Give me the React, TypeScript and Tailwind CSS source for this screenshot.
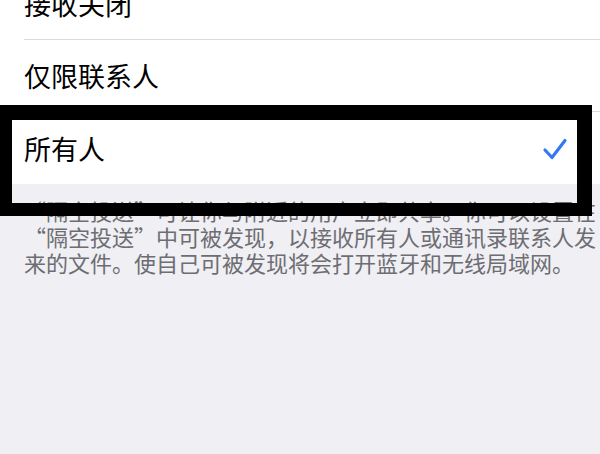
import React from "react";

const font = { fontFamily: '"Noto Sans CJK SC", "Noto Sans", sans-serif' };

function Row({ label, checked, last }: { label: string; checked?: boolean; last?: boolean }) {
  return (
    <div className="pl-[24px] h-[72px] flex">
      <div className={`flex-1 flex items-center justify-between pr-[32px] ${last ? "" : "border-b border-[#dcdcdf]"}`}>
        <span className="text-[27px] leading-none text-black">{label}</span>
        {checked && (
          <svg width="26" height="24" viewBox="0 0 26 24" className="mt-[1px]">
            <path d="M3 13 L10 20.5 L23 3.5" fill="none" stroke="#3478f6" strokeWidth="3.2" strokeLinecap="round" strokeLinejoin="round" />
          </svg>
        )}
      </div>
    </div>
  );
}

export default function App() {
  return (
    <div className="relative w-[600px] h-[454px] overflow-hidden bg-[#efeff4]" style={font}>
      <div className="-mt-[32px] bg-white">
        <Row label="接收关闭" />
        <Row label="仅限联系人" />
        <Row label="所有人" checked last />
      </div>
      <div className="pl-[24px] pr-[30px] pt-[13px] text-[22px] leading-[26px] text-[#6d6d72]">
        <p className="whitespace-nowrap">“隔空投送”可让你与附近的用户立即共享。你可以设置在</p>
        <p className="whitespace-nowrap">“隔空投送”中可被发现，以接收所有人或通讯录联系人发</p>
        <p className="whitespace-nowrap">来的文件。使自己可被发现将会打开蓝牙和无线局域网。</p>
      </div>
      <div className="absolute left-0 top-[105px] w-[592px] h-[111px] border-solid border-black border-t-[15px] border-r-[15px] border-b-[13px] border-l-[12px]" />
    </div>
  );
}
